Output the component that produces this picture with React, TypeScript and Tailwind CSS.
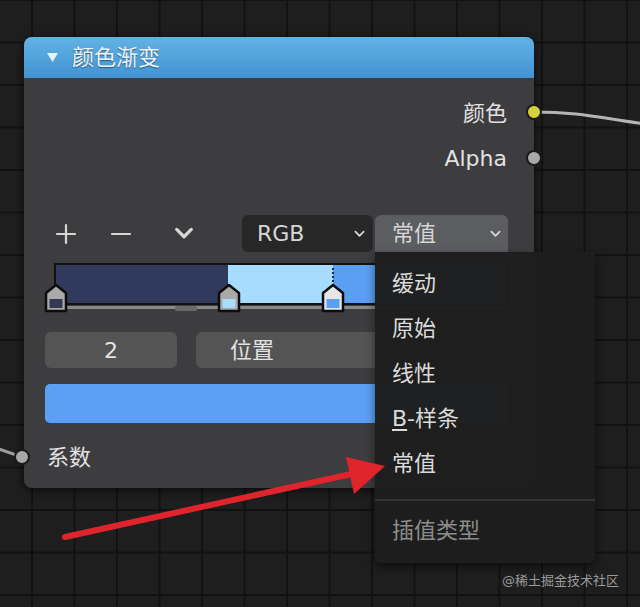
import React from 'react';

const FONT = "font-['DejaVu_Sans','Noto_Sans_CJK_SC',sans-serif]";

function Socket({ color, className }: { color: string; className: string }) {
  return (
    <span
      className={`absolute w-[16px] h-[16px] rounded-full border-2 border-[#1b1b1b] ${color} ${className}`}
    />
  );
}

function Chevron({ className }: { className: string }) {
  return (
    <svg className={className} viewBox="0 0 12 8" fill="none" stroke="currentColor" strokeWidth="2" strokeLinecap="round" strokeLinejoin="round">
      <polyline points="1.5 1.5 6 6 10.5 1.5" />
    </svg>
  );
}

function Marker({ x, swatch, selected }: { x: number; swatch: string; selected?: boolean }) {
  return (
    <svg
      className="absolute top-[20px] w-[24px] h-[30px]"
      style={{ left: x - 12 }}
      viewBox="0 0 24 30"
    >
      <polygon points="12,2 22,10 22,28 2,28 2,10" fill={selected ? '#e6e6e6' : '#a9a9a9'} stroke="#0d0d0d" strokeWidth="2.5" strokeLinejoin="round" />
      <rect x="5.5" y="16" width="13" height="9" fill={swatch} />
    </svg>
  );
}

function ColorRamp() {
  return (
    <div className="relative ml-[30px] w-[454px] h-[50px]">
      <div className="flex h-[42px] border-2 border-[#111111] bg-[#5b9ff3]">
        <div className="w-[172px] bg-[#2f3a5d]" />
        <div className="w-[105px] bg-[#a8dcff]" />
        <div className="flex-1 bg-[#5b9ff3]" />
      </div>
      <div className="h-[3px] mt-[1px] bg-[#8a8a8a]" />
      <div className="absolute left-[121px] top-[43px] w-[22px] h-[5px] rounded-[2px] bg-[#6a6a6a]" />
      <div className="absolute left-[278px] top-[5px] h-[18px] border-l-2 border-dotted border-[#1e2a48]" />
      <Marker x={2} swatch="#34394f" />
      <Marker x={175} swatch="#a8dcff" />
      <Marker x={279} swatch="#5b9ff3" selected />
    </div>
  );
}

function Node() {
  return (
    <div className={`absolute left-[24px] top-[37px] w-[510px] h-[451px] rounded-[8px] bg-[#3d3c3e] shadow-[0_2px_8px_rgba(0,0,0,0.7)] text-[22px] text-[#e2e2e2] ${FONT}`}>
      <div className="flex items-center h-[41px] rounded-t-[8px] bg-gradient-to-b from-[#62b2e6] to-[#4393d2] pl-[23px] text-[#eef4fa] [text-shadow:0_1px_1px_rgba(0,0,0,0.45)]">
        <svg className="w-[11px] h-[9px]" viewBox="0 0 11 9">
          <polygon points="0,0 11,0 5.5,9" fill="#e9f3fb" />
        </svg>
        <span className="ml-[14px] leading-none">颜色渐变</span>
      </div>

      <div className="relative flex items-center justify-end h-[30px] mt-[20px] pr-[27px]">
        <span>颜色</span>
        <Socket color="bg-[#d6d23c]" className="right-[-8px] top-[6px]" />
      </div>
      <div className="relative flex items-center justify-end h-[30px] mt-[15px] pr-[27px]">
        <span>Alpha</span>
        <Socket color="bg-[#a9a9a9]" className="right-[-8px] top-[7px]" />
      </div>

      <div className="flex items-center h-[37px] mt-[42px] pl-[31px] text-[#d6d6d6]">
        <svg className="w-[22px] h-[22px]" viewBox="0 0 22 22" stroke="currentColor" strokeWidth="2.2" strokeLinecap="round">
          <line x1="11" y1="2" x2="11" y2="20" />
          <line x1="2" y1="11" x2="20" y2="11" />
        </svg>
        <svg className="ml-[33px] w-[22px] h-[22px]" viewBox="0 0 22 22" stroke="currentColor" strokeWidth="2.2" strokeLinecap="round">
          <line x1="2" y1="11" x2="20" y2="11" />
        </svg>
        <Chevron className="ml-[41px] w-[22px] h-[13px]" />
        <div className="ml-[47px] w-[131px] h-[37px] flex items-center justify-between pl-[15px] pr-[8px] rounded-[6px] bg-[#272727]">
          <span>RGB</span>
          <Chevron className="w-[11px] h-[8px]" />
        </div>
        <div className="ml-[2px] w-[133px] h-[37px] flex items-center justify-between pl-[17px] pr-[7px] rounded-t-[6px] bg-[#5c5d61]">
          <span>常值</span>
          <Chevron className="w-[11px] h-[8px]" />
        </div>
      </div>

      <div className="mt-[11px]">
        <ColorRamp />
      </div>

      <div className="flex mt-[19px] pl-[21px] gap-[19px]">
        <div className="w-[132px] h-[36px] flex items-center justify-center rounded-[6px] bg-[#545454]">2</div>
        <div className="w-[312px] h-[36px] flex items-center pl-[34px] rounded-[6px] bg-[#545454]">位置</div>
      </div>

      <div className="ml-[21px] mt-[16px] w-[463px] h-[39px] rounded-[5px] bg-[#5ba0f5]" />

      <div className="relative flex items-center h-[30px] mt-[19px] pl-[23px]">
        <span>系数</span>
        <Socket color="bg-[#a8a8a8]" className="left-[-10px] top-[7px]" />
      </div>
    </div>
  );
}

function Menu() {
  const items = ['缓动', '原始', '线性', 'B-样条', '常值'];
  return (
    <div className={`absolute left-[375px] top-[252px] w-[220px] h-[311px] pt-[9px] rounded-b-[6px] bg-[#1e1e1e]/[0.98] shadow-[0_4px_10px_rgba(0,0,0,0.5)] text-[22px] text-[#dadada] ${FONT}`}>
      {items.map((item) => (
        <div key={item} className="flex items-center h-[45px] pl-[17px]">
          {item === 'B-样条' ? (
            <span>
              <span className="underline underline-offset-[3px] decoration-[2px]">B</span>-样条
            </span>
          ) : (
            <span>{item}</span>
          )}
        </div>
      ))}
      <div className="mt-[13px] border-t-2 border-[#343434]" />
      <div className="flex items-center h-[58px] pl-[17px] text-[#8c8c8c]">插值类型</div>
    </div>
  );
}

export default function App() {
  return (
    <div className="relative w-[640px] h-[607px] overflow-hidden bg-[#1e1e1e] bg-[linear-gradient(#121212_2px,transparent_2px),linear-gradient(90deg,#121212_2px,transparent_2px)] bg-[size:42.5px_42.5px] bg-[position:31px_-1px]">
      <svg className="absolute inset-0" width="640" height="607" fill="none">
        <path d="M534 112 C 580 112, 600 118, 645 124" stroke="#b4b4b4" strokeWidth="3" />
        <path d="M-4 448 L 22 457" stroke="#9c9c9c" strokeWidth="3" />
      </svg>

      <Node />
      <Menu />

      <svg className="absolute inset-0" width="640" height="607">
        <line x1="65" y1="537" x2="356" y2="473" stroke="#e0242c" strokeWidth="6" strokeLinecap="round" />
        <polygon points="385,466 346,457 354,494" fill="#e0242c" />
      </svg>

      <div className={`absolute left-[502px] top-[571px] text-[13px] text-[#9a9a9a] ${FONT}`}>@稀土掘金技术社区</div>
    </div>
  );
}
